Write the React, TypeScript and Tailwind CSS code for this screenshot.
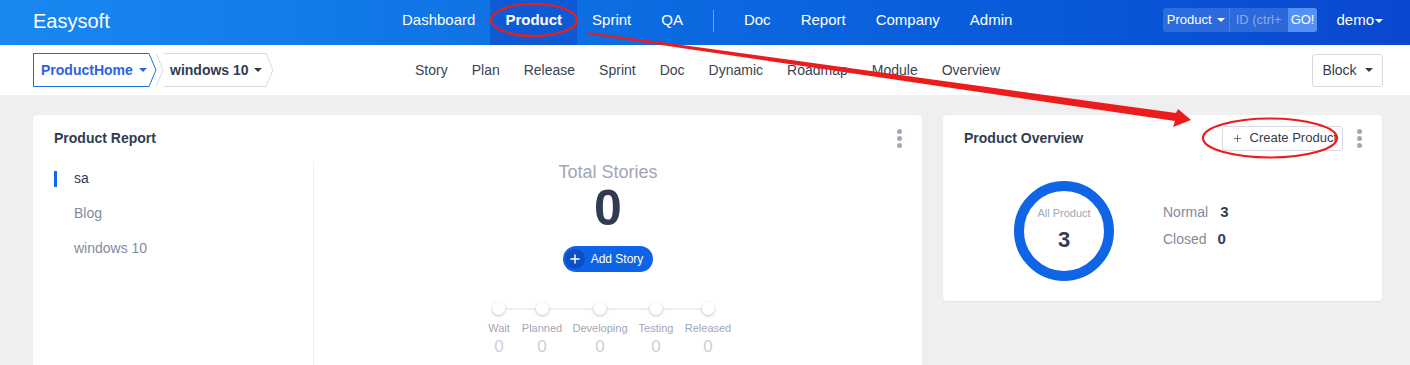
import { Plus } from 'lucide-react';

const topNav = ['Dashboard', 'Product', 'Sprint', 'QA'];
const topNav2 = ['Doc', 'Report', 'Company', 'Admin'];
const subNav = ['Story', 'Plan', 'Release', 'Sprint', 'Doc', 'Dynamic', 'Roadmap', 'Module', 'Overview'];
const steps = [
  { label: 'Wait', x: 499 },
  { label: 'Planned', x: 542 },
  { label: 'Developing', x: 600 },
  { label: 'Testing', x: 656 },
  { label: 'Released', x: 708 },
];

function Caret({ className = '' }: { className?: string }) {
  return <span className={`inline-block w-0 h-0 border-x-[4px] border-x-transparent border-t-[4px] ${className}`} />;
}

function Kebab() {
  return (
    <div className="flex flex-col gap-[2px] items-center">
      <span className="w-[5px] h-[5px] rounded-full bg-[#a4a8b6]" />
      <span className="w-[5px] h-[5px] rounded-full bg-[#a4a8b6]" />
      <span className="w-[5px] h-[5px] rounded-full bg-[#a4a8b6]" />
    </div>
  );
}

function Header() {
  return (
    <header className="h-[45px] flex items-center text-white bg-gradient-to-r from-[#1a88f1] to-[#0a47cf]">
      <div className="pl-[33px] text-[20px] w-[387px] pb-[4px]">Easysoft</div>
      <nav className="flex h-full items-center text-[15px]">
        {topNav.map((n) => (
          <div
            key={n}
            className={`h-full flex items-center px-[15px] pb-[4px] ${n === 'Product' ? 'bg-[#0d5ad4] font-bold' : ''}`}
          >
            {n}
          </div>
        ))}
        <span className="mx-[15px] mb-[4px] w-px h-[22px] bg-white/40" />
        {topNav2.map((n) => (
          <div key={n} className="h-full flex items-center px-[15px] pb-[4px]">
            {n}
          </div>
        ))}
      </nav>
      <div className="ml-auto mb-[6px] flex items-center h-[24px] rounded-[3px] overflow-hidden text-[13px] bg-white/15">
        <div className="flex items-center gap-[5px] px-[4px] h-full border-r border-white/15">
          Product <Caret className="border-t-white" />
        </div>
        <input
          className="w-[58px] px-[6px] bg-transparent outline-none text-[13px] placeholder:text-white/45"
          placeholder="ID (ctrl+g)"
        />
        <div className="h-full flex items-center px-[3px] bg-[#5590f4]">GO!</div>
      </div>
      <div className="ml-[19px] mr-[27px] mb-[4px] flex items-center gap-[1px] text-[15px]">
        demo <Caret className="border-t-white" />
      </div>
    </header>
  );
}

function SubHeader() {
  return (
    <div className="h-[50px] bg-white flex items-center relative">
      <div className="pl-[33px] flex items-center w-[400px]">
        <div className="relative h-[34px] flex items-center">
          <div className="h-[34px] w-[116px] border border-r-0 border-[#1d6be8] flex items-center pl-[7px] gap-[6px] text-[14px] font-bold text-[#2d62e0]">
            ProductHome <Caret className="border-t-[#2d62e0]" />
          </div>
          <svg width="8" height="34" viewBox="0 0 8 34" className="block">
            <polyline points="0,0.5 7,17 0,33.5" fill="white" stroke="#1d6be8" strokeWidth="1" />
          </svg>
        </div>
        <div className="relative h-[34px] flex items-center -ml-[1px]">
          <svg width="8" height="34" viewBox="0 0 8 34" className="block">
            <polyline points="0,0.5 7,17 0,33.5" fill="none" stroke="#d8dbe2" strokeWidth="1" />
          </svg>
          <div className="h-[34px] border-y border-[#d8dbe2] flex items-center pl-[6px] pr-[4px] gap-[5px] text-[14px] font-bold text-[#313c52]">
            windows 10 <Caret className="border-t-[#313c52]" />
          </div>
          <svg width="8" height="34" viewBox="0 0 8 34" className="block">
            <polyline points="0,0.5 7,17 0,33.5" fill="white" stroke="#d8dbe2" strokeWidth="1" />
          </svg>
        </div>
      </div>
      <nav className="flex items-center gap-[24px] text-[14px] text-[#3c4353] ml-[15px]">
        {subNav.map((n) => (
          <span key={n}>{n}</span>
        ))}
      </nav>
      <div className="ml-auto mr-[27px] h-[33px] w-[71px] border border-[#d8dbe2] rounded-[3px] flex items-center justify-center gap-[8px] text-[14px] text-[#313c52]">
        Block <Caret className="border-t-[#313c52]" />
      </div>
    </div>
  );
}

function ProductReport() {
  return (
    <section className="w-[889px] h-[260px] shrink-0 bg-white rounded-[4px] shadow-[0_1px_2px_rgba(0,0,0,0.06)] flex flex-col">
      <div className="flex items-center justify-between pl-[21px] pr-[20px] h-[46px]">
        <h2 className="text-[14px] font-bold text-[#313c52]">Product Report</h2>
        <Kebab />
      </div>
      <div className="flex flex-1">
        <ul className="w-[281px] shrink-0 border-r border-[#eef0f4] text-[14px]">
          <li className="flex items-center h-[35px]">
            <span className="ml-[21px] w-[3px] h-[16px] bg-[#1466e8]" />
            <span className="ml-[17px] text-[#313c52]">sa</span>
          </li>
          <li className="h-[35px] flex items-center pl-[41px] text-[#838a9d]">Blog</li>
          <li className="h-[35px] flex items-center pl-[41px] text-[#838a9d]">windows 10</li>
        </ul>
        <div className="flex-1 relative">
          <div className="flex flex-col items-center w-[588px]">
            <div className="text-[18px] text-[#a2a6b4] leading-[22px]">Total Stories</div>
            <div className="text-[50px] font-bold text-[#313c52] leading-[50px]">0</div>
            <button className="mt-[13px] h-[26px] pl-[2px] pr-[10px] rounded-full bg-[#0f63e8] flex items-center gap-[6px] text-white text-[12px]">
              <span className="w-[20px] h-[20px] rounded-full bg-[#0b4fc7] flex items-center justify-center">
                <Plus size={14} strokeWidth={2.5} />
              </span>
              Add Story
            </button>
          </div>
          <div className="absolute left-0 top-[141px] w-[588px] h-[60px]">
            <div className="absolute top-[6px] h-[2px] bg-[#eeeff2]" style={{ left: 499 - 314, width: 708 - 499 }} />
            {steps.map((s) => (
              <div key={s.label} className="absolute top-0 flex flex-col items-center -translate-x-1/2" style={{ left: s.x - 314 }}>
                <span className="w-[13px] h-[13px] rounded-full bg-white shadow-[0_1px_3px_rgba(0,0,0,0.25)]" />
                <span className="mt-[7px] text-[11px] text-[#a2a6b4] leading-[13px]">{s.label}</span>
                <span className="mt-[2px] text-[17px] text-[#ccd0da] leading-[20px]">0</span>
              </div>
            ))}
          </div>
        </div>
      </div>
    </section>
  );
}

function ProductOverview() {
  return (
    <section className="w-[439px] h-[186px] bg-white rounded-[4px] shadow-[0_1px_2px_rgba(0,0,0,0.06)] flex flex-col">
      <div className="flex items-center pl-[21px] pr-[20px] h-[46px]">
        <h2 className="text-[14px] font-bold text-[#313c52]">Product Overview</h2>
        <button className="ml-auto h-[25px] pl-[9px] pr-[5px] border border-[#d8dbe2] rounded-[3px] flex items-center gap-[7px] text-[13px] text-[#313c52]">
          <Plus size={11} strokeWidth={1.5} /> Create Product
        </button>
        <div className="ml-[14px]">
          <Kebab />
        </div>
      </div>
      <div className="flex items-start pl-[71px] pt-[20px]">
        <div className="w-[100px] h-[100px] rounded-full border-[10px] border-[#1065e6] flex flex-col items-center justify-center">
          <span className="text-[11px] text-[#a2a6b4] leading-[13px] -mt-[4px]">All Product</span>
          <span className="mt-[8px] text-[22px] font-bold text-[#313c52] leading-[24px]">3</span>
        </div>
        <div className="ml-[49px] mt-[22px] flex flex-col gap-[9px] text-[14px]">
          <div className="flex items-center gap-[12px] leading-[18px]">
            <span className="text-[#838a9d]">Normal</span>
            <span className="font-bold text-[#313c52] text-[15px]">3</span>
          </div>
          <div className="flex items-center gap-[11px] leading-[18px]">
            <span className="text-[#838a9d]">Closed</span>
            <span className="font-bold text-[#313c52] text-[15px]">0</span>
          </div>
        </div>
      </div>
    </section>
  );
}

function Annotations() {
  return (
    <svg className="absolute inset-0 pointer-events-none" width="1410" height="365" viewBox="0 0 1410 365">
      <ellipse cx="534" cy="20" rx="43" ry="16" fill="none" stroke="#ec1c1c" strokeWidth="2.2" />
      <ellipse cx="1270" cy="138" rx="67" ry="19.5" fill="none" stroke="#ec1c1c" strokeWidth="2.2" />
      <polygon
        points="587,32 1176,113 1178,109 1191,120 1173,127 1175,121 587,34"
        fill="#ec1c1c"
      />
    </svg>
  );
}

export default function App() {
  return (
    <div className="relative w-[1410px] h-[365px] overflow-hidden bg-[#efefef] font-['Liberation_Sans',Arial,sans-serif]">
      <Header />
      <SubHeader />
      <main className="flex gap-[21px] pl-[33px] pt-[20px]">
        <ProductReport />
        <ProductOverview />
      </main>
      <Annotations />
    </div>
  );
}
